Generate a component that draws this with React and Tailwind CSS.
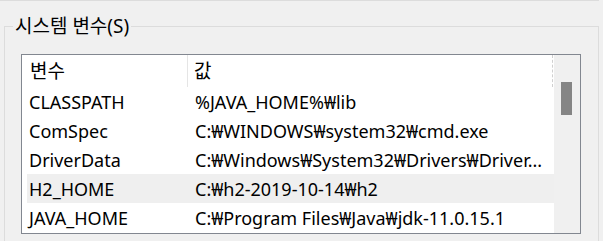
import React from "react";

const rows = [
   { name: "CLASSPATH", value: "%JAVA_HOME%₩lib" },
   { name: "ComSpec", value: "C:₩WINDOWS₩system32₩cmd.exe" },
   { name: "DriverData", value: "C:₩Windows₩System32₩Drivers₩Driver..." },
   { name: "H2_HOME", value: "C:₩h2-2019-10-14₩h2", selected: true },
   { name: "JAVA_HOME", value: "C:₩Program Files₩Java₩jdk-11.0.15.1" },
];

const App = () => {
   return (
      <div
         className="w-[603px] h-[241px] overflow-hidden bg-[#f0f0f0] text-[18px] text-black"
         style={{ fontFamily: '"Noto Sans", "Noto Sans CJK KR", sans-serif' }}
      >
         {/* line left over from the group above */}
         <div className="h-px w-[599px] bg-[#dcdcdc]" />

         {/* System variables group */}
         <div className="relative ml-[4px] mt-[25px] w-[595px] h-[300px] border border-[#dcdcdc]">
            <span className="absolute left-[8px] -top-[14px] px-[2px] bg-[#f0f0f0] leading-[26px] text-[19px]">
               시스템 변수(S)
            </span>

            {/* List box */}
            <div className="ml-[16px] mt-[27px] w-[560px] h-[180px] border border-[#828790] bg-white flex">
               <div className="w-[532px] flex flex-col">
                  {/* Header */}
                  <div className="h-[32px] flex items-center relative text-[19px]">
                     <div className="w-[166px] pl-[8px] h-full flex items-center border-r border-[#e5e5e5]">
                        변수
                     </div>
                     <div className="pl-[6px] flex-1 h-full flex items-center">값</div>
                     <div className="absolute left-[530px] top-0 h-full border-l border-dashed border-[#d0d0d0]" />
                  </div>

                  {/* Rows */}
                  {rows.map((row) => (
                     <div
                        key={row.name}
                        className={`ml-[5px] h-[29px] pt-[2px] flex items-center whitespace-nowrap ${
                           row.selected ? "bg-[#efefef]" : ""
                        }`}
                     >
                        <div className="w-[168px] pl-[2px]">{row.name}</div>
                        <div>{row.value}</div>
                     </div>
                  ))}
               </div>

               {/* Scrollbar */}
               <div className="w-[26px] bg-[#f0f0f0] pl-[7px] pt-[27px]">
                  <div className="w-[11px] h-[33px] bg-[#858585]" />
               </div>
            </div>
         </div>
      </div>
   );
};

export default App;
